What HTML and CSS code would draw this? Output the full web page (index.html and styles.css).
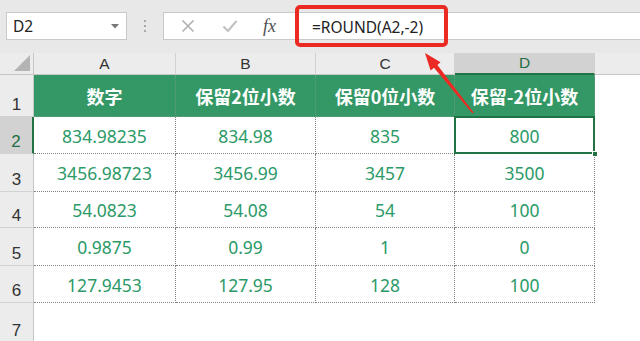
FILE: index.html
```html
<!DOCTYPE html>
<html lang="zh">
<head>
<meta charset="utf-8">
<title>ROUND</title>
<link rel="stylesheet" href="styles.css">
</head>
<body>
<div class="app">
  <div class="toolbar">
    <div class="namebox">
      <span class="name">D2</span>
      <svg class="caret" width="8" height="5" viewBox="0 0 8 5"><path d="M0 0h8L4 4.5z" fill="#777"/></svg>
    </div>
    <div class="grip"><i></i><i></i><i></i></div>
    <div class="formula">
      <div class="fbtns">
        <svg class="fbtn" width="14" height="14" viewBox="0 0 14 14"><path d="M1.5 1.5l11 11M12.5 1.5l-11 11" stroke="#b0b0b0" stroke-width="1.6" fill="none"/></svg>
        <svg class="fbtn" width="16" height="14" viewBox="0 0 16 14"><path d="M1.5 7.5l4.5 4.5L14.5 2" stroke="#c2c2c2" stroke-width="2.2" fill="none"/></svg>
        <span class="fx">fx</span>
      </div>
      <div class="ftext">=ROUND(A2,-2)</div>
    </div>
    <div class="callout"></div>
  </div>

  <div class="sheet">
    <div class="corner"><span class="tri"></span></div>
    <div class="ch">A</div>
    <div class="ch">B</div>
    <div class="ch">C</div>
    <div class="ch sel">D</div>
    <div class="ch blank"></div>

    <div class="rh">1</div>
    <div class="c head">数字</div>
    <div class="c head">保留2位小数</div>
    <div class="c head">保留0位小数</div>
    <div class="c head">保留-2位小数</div>
    <div class="e"></div>

    <div class="rh sel">2</div>
    <div class="c">834.98235</div>
    <div class="c">834.98</div>
    <div class="c">835</div>
    <div class="c active">800<span class="handle"></span></div>
    <div class="e"></div>

    <div class="rh">3</div>
    <div class="c">3456.98723</div>
    <div class="c">3456.99</div>
    <div class="c">3457</div>
    <div class="c">3500</div>
    <div class="e"></div>

    <div class="rh">4</div>
    <div class="c">54.0823</div>
    <div class="c">54.08</div>
    <div class="c">54</div>
    <div class="c">100</div>
    <div class="e"></div>

    <div class="rh">5</div>
    <div class="c">0.9875</div>
    <div class="c">0.99</div>
    <div class="c">1</div>
    <div class="c">0</div>
    <div class="e"></div>

    <div class="rh">6</div>
    <div class="c">127.9453</div>
    <div class="c">127.95</div>
    <div class="c">128</div>
    <div class="c">100</div>
    <div class="e"></div>

    <div class="rh">7</div>
    <div class="e"></div>
    <div class="e"></div>
    <div class="e"></div>
    <div class="e"></div>
    <div class="e"></div>
  </div>

  <svg class="arrow" width="640" height="341" viewBox="0 0 640 341">
    <polygon points="425,53 440.5,62.3 437.4,65 473.6,112.6 472.4,113.4 434,67.8 430.6,70.4" fill="#ec2a24"/>
  </svg>
</div>
</body>
</html>
```

FILE: styles.css
```css
* { box-sizing: border-box; }

html, body {
  margin: 0;
  padding: 0;
  background: #ffffff;
}

.app {
  position: relative;
  width: 640px;
  height: 341px;
  overflow: hidden;
  font-family: "Noto Sans", "Noto Sans CJK SC", sans-serif;
}

/* ---- formula toolbar ---- */
.toolbar {
  position: relative;
  height: 53px;
  background: #e8e8e8;
  display: flex;
  align-items: flex-start;
  padding: 12px 0 0 6px;
}

.namebox {
  width: 121px;
  height: 28px;
  background: #fff;
  border: 1px solid #c9c9c9;
  display: flex;
  align-items: center;
  justify-content: space-between;
  padding: 0 7px 0 6px;
}

.name {
  font-size: 15.5px;
  color: #222;
}

.grip {
  width: 36px;
  height: 28px;
  display: flex;
  flex-direction: column;
  align-items: center;
  justify-content: center;
  gap: 3px;
}

.grip i {
  width: 2px;
  height: 2px;
  background: #a8a8a8;
}

.formula {
  flex: 1;
  height: 28px;
  background: #fff;
  border: 1px solid #c9c9c9;
  border-right: 0;
  display: flex;
  align-items: center;
}

.fbtns {
  width: 132px;
  display: flex;
  align-items: center;
  padding-left: 17px;
}

.fbtn:first-child { margin-right: 27px; }
.fbtn:nth-child(2) { margin-right: 25px; }

.fx {
  font-family: "Liberation Serif", "DejaVu Serif", serif;
  font-style: italic;
  font-size: 18px;
  color: #505050;
  line-height: 1;
}

.ftext {
  padding-left: 16px;
  font-size: 15.5px;
  color: #222;
  padding-top: 1px;
}

.callout {
  position: absolute;
  left: 295px;
  top: 5px;
  width: 153px;
  height: 42px;
  border: 4px solid #ec2a24;
  border-radius: 5px;
}

/* ---- worksheet grid ---- */
.sheet {
  display: grid;
  grid-template-columns: 34px 142px 140px 139px 140px 1fr;
  grid-template-rows: 22px 42px 37px 38px 36px 38px 37px 40px;
}

.corner {
  position: relative;
  background: #ececec;
  border-right: 1px solid #c6c6c6;
  border-bottom: 1px solid #c6c6c6;
}

.tri {
  position: absolute;
  right: 3px;
  bottom: 3px;
  width: 0;
  height: 0;
  border-left: 16px solid transparent;
  border-bottom: 16px solid #b4b4b4;
}

.ch {
  background: #ececec;
  border-right: 1px solid #d2d2d2;
  border-bottom: 1px solid #c6c6c6;
  display: flex;
  align-items: center;
  justify-content: center;
  font-family: "Liberation Sans", Arial, sans-serif;
  font-size: 15.5px;
  color: #333;
}

.ch.sel {
  background: #d2d2d2;
  color: #1f6e43;
  border-bottom: 2px solid #217346;
}

.ch.blank {
  border-right: 0;
}

.rh {
  background: #ececec;
  border-right: 1px solid #c6c6c6;
  border-bottom: 1px solid #d2d2d2;
  display: flex;
  align-items: flex-end;
  justify-content: center;
  padding-bottom: 1px;
  font-family: "Liberation Sans", Arial, sans-serif;
  font-size: 17px;
  color: #333;
}

.rh.sel {
  background: #d2d2d2;
  color: #1f6e43;
  border-right: 2px solid #217346;
}

.c {
  position: relative;
  border-right: 1px dotted #808080;
  border-bottom: 1px dotted #808080;
  display: flex;
  align-items: center;
  justify-content: center;
  font-size: 17.5px;
  color: #2c9a68;
  padding-top: 1px;
}

.c.head {
  background: #349866;
  color: #fff;
  font-family: "Noto Sans CJK SC", "Noto Sans", sans-serif;
  font-weight: 700;
  font-size: 18px;
  border-right-color: #6a9c80;
  border-bottom-color: #6a9c80;
}

.c.active::after {
  content: "";
  position: absolute;
  left: -1px;
  top: -1px;
  right: -1px;
  bottom: -1px;
  border: 2px solid #217346;
}

.handle {
  position: absolute;
  right: -4px;
  bottom: -4px;
  width: 6px;
  height: 6px;
  background: #217346;
  border: 1px solid #fff;
  z-index: 2;
}

.e {
  background: #fff;
}

.arrow {
  position: absolute;
  left: 0;
  top: 0;
  pointer-events: none;
}
```
